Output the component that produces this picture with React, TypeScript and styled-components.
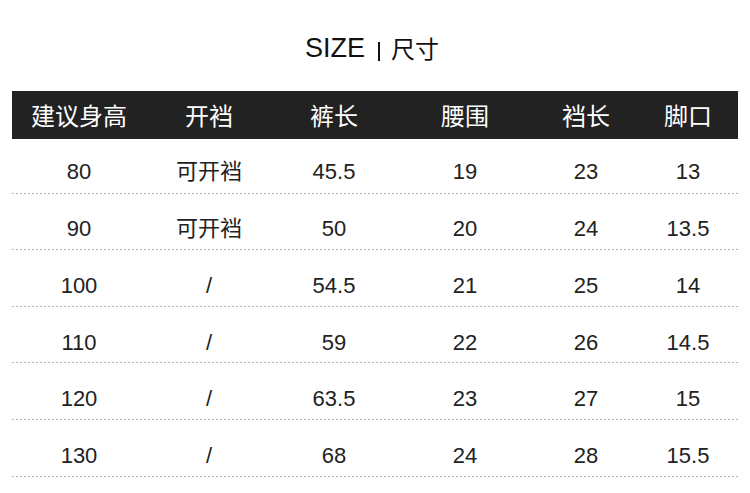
import styled, { createGlobalStyle } from "styled-components";

const GlobalStyle = createGlobalStyle`
  html, body {
    margin: 0;
    padding: 0;
    background: #ffffff;
  }
  body {
    font-family: "Liberation Sans", "Noto Sans CJK SC", sans-serif;
    color: #222222;
  }
`;

const Page = styled.div`
  width: 750px;
  padding: 0 12px;
  box-sizing: border-box;
`;

const Title = styled.h1`
  height: 91px;
  margin: 0;
  padding: 5px 6px 0 0;
  box-sizing: border-box;
  display: flex;
  justify-content: center;
  align-items: center;
  font-weight: 400;
  line-height: 1;
  color: #111111;
`;

const TitleEn = styled.span`
  font-size: 27px;
  font-family: "Liberation Sans", sans-serif;
`;

const TitleCn = styled.span`
  font-size: 24px;
  font-family: "Noto Sans CJK SC", sans-serif;
`;

const Divider = styled.i`
  display: block;
  flex: none;
  width: 2px;
  height: 19px;
  margin: 6px 11px 0 13px;
  background: #111111;
`;

const columns = "134px 126px 124px 138px 104px 1fr";

const HeadRow = styled.div`
  display: grid;
  grid-template-columns: ${columns};
  height: 48px;
  align-items: center;
  background: #222222;
  color: #ffffff;
  font-family: "Noto Sans CJK SC", sans-serif;
  font-size: 24px;
  line-height: 1;
`;

const Row = styled.div`
  display: grid;
  grid-template-columns: ${columns};
  align-items: center;
  height: 56.6px;
  padding-top: 15px;
  box-sizing: border-box;
  font-size: 22px;
  line-height: 1;
  background-image: linear-gradient(to right, #b4b4b4 50%, transparent 0);
  background-size: 4px 1px;
  background-repeat: repeat-x;
  background-position: 0 100%;

  &:first-child {
    height: 54.7px;
    padding-top: 12px;
  }
`;

const Cell = styled.div`
  text-align: center;
  white-space: nowrap;
`;

const headers = ["建议身高", "开裆", "裤长", "腰围", "裆长", "脚口"];

const rows = [
  ["80", "可开裆", "45.5", "19", "23", "13"],
  ["90", "可开裆", "50", "20", "24", "13.5"],
  ["100", "/", "54.5", "21", "25", "14"],
  ["110", "/", "59", "22", "26", "14.5"],
  ["120", "/", "63.5", "23", "27", "15"],
  ["130", "/", "68", "24", "28", "15.5"],
];

const App = () => {
  return (
    <>
      <GlobalStyle />
      <Page>
        <Title>
          <TitleEn>SIZE</TitleEn>
          <Divider />
          <TitleCn>尺寸</TitleCn>
        </Title>
        <HeadRow>
          {headers.map((h) => (
            <Cell key={h}>{h}</Cell>
          ))}
        </HeadRow>
        <div>
          {rows.map((r) => (
            <Row key={r[0]}>
              {r.map((v, i) => (
                <Cell key={i}>{v}</Cell>
              ))}
            </Row>
          ))}
        </div>
      </Page>
    </>
  );
};

export default App;
